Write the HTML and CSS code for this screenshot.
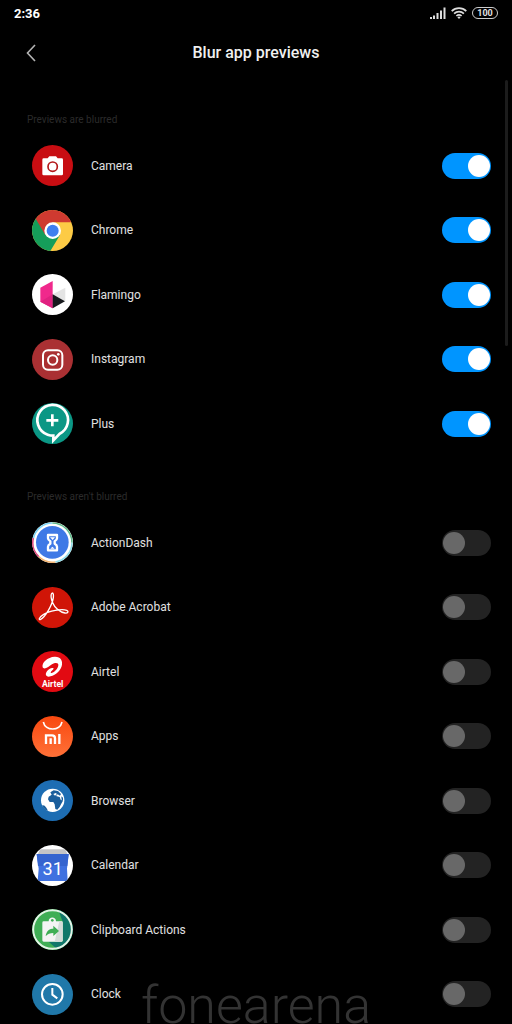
FILE: index.html
```
<!DOCTYPE html>
<html lang="en">
<head>
    <meta charset="UTF-8">
    <meta name="viewport" content="width=device-width, initial-scale=1.0">
    <title>Blur app previews</title>
    <link rel="stylesheet" href="styles.css">
</head>
<body>
    <div class="screen">
        <div class="status-bar">
            <span class="time">2:36</span>
            <div class="status-icons">
                <svg width="16" height="12" viewBox="0 0 16 12" fill="#ddd">
                    <rect x="0" y="10" width="2" height="2"/>
                    <rect x="3" y="8.5" width="2" height="3.5"/>
                    <rect x="6.5" y="6" width="2" height="6"/>
                    <rect x="10" y="3.5" width="2" height="8.5"/>
                    <rect x="13.5" y="0.5" width="2" height="11.5"/>
                </svg>
                <svg width="16" height="12" viewBox="0 0 16 12" fill="none" stroke="#ddd" stroke-width="1.7">
                    <path d="M0.7 4.2a10.4 10.4 0 0 1 14.6 0M3.1 6.7a7 7 0 0 1 9.8 0M5.4 9a3.8 3.8 0 0 1 5.2 0"/>
                    <path d="M8 12l-1.6-1.7a2.3 2.3 0 0 1 3.2 0z" fill="#ddd" stroke="none"/>
                </svg>
                <span class="battery">100</span>
            </div>
        </div>

        <header class="header">
            <button class="back-button" aria-label="Back">
                <svg width="12" height="20" viewBox="0 0 12 20" fill="none" stroke="#b4b4b4" stroke-width="1.6">
                    <path d="M9 2L1.500 10 9 18"/>
                </svg>
            </button>
            <h1>Blur app previews</h1>
        </header>

        <main>
            <section>
                <h2>Previews are blurred</h2>
                <ul class="app-list">
                    <li>
                        <label class="app-row">
                            <svg class="app-icon" viewBox="0 0 123 123">
                                <rect width="123" height="123" fill="#c80d12"/>
                                <path d="M35 40h12l5-6h20l5 6h12a4 4 0 0 1 4 4v43a4 4 0 0 1-4 4H35a4 4 0 0 1-4-4V44a4 4 0 0 1 4-4z" fill="#fff"/>
                                <circle cx="62" cy="65" r="14" fill="#fff" stroke="#b3181a" stroke-width="5"/>
                            </svg>
                            <span class="app-name">Camera</span>
                            <input type="checkbox" class="toggle" checked>
                        </label>
                    </li>
                    <li>
                        <label class="app-row">
                            <svg class="app-icon" viewBox="0 0 123 123">
                                <rect width="123" height="123" fill="#fdcb45"/>
                                <path d="M0 0v123h55l29-48-22-13L14 24z" fill="#159e5a"/>
                                <path d="M0 0h123v37H62v25L40 75 11 26z" fill="#cf3a30"/>
                                <circle cx="62" cy="62" r="25" fill="#fff"/>
                                <circle cx="62" cy="62" r="18" fill="#3f7ff0"/>
                            </svg>
                            <span class="app-name">Chrome</span>
                            <input type="checkbox" class="toggle" checked>
                        </label>
                    </li>
                    <li>
                        <label class="app-row">
                            <svg class="app-icon" viewBox="0 0 123 123">
                                <rect width="123" height="123" fill="#fff"/>
                                <path d="M25 41l37-20v82L25 83z" fill="#f0288c"/>
                                <path d="M25 83l37-22v42z" fill="#e02180"/>
                                <path d="M62 61l38-20v41z" fill="#e4e4e4"/>
                                <path d="M62 61l37 21-37 21z" fill="#17191d"/>
                            </svg>
                            <span class="app-name">Flamingo</span>
                            <input type="checkbox" class="toggle" checked>
                        </label>
                    </li>
                    <li>
                        <label class="app-row">
                            <svg class="app-icon" viewBox="0 0 123 123">
                                <rect width="123" height="123" fill="#aa3033"/>
                                <g fill="none" stroke="#fff" stroke-width="6">
                                    <rect x="33" y="34" width="58" height="58" rx="15"/>
                                    <circle cx="62" cy="63" r="14"/>
                                </g>
                                <circle cx="79" cy="46" r="4" fill="#fff"/>
                            </svg>
                            <span class="app-name">Instagram</span>
                            <input type="checkbox" class="toggle" checked>
                        </label>
                    </li>
                    <li>
                        <label class="app-row">
                            <svg class="app-icon" viewBox="0 0 123 123">
                                <rect width="123" height="123" fill="#0b9785"/>
                                <path d="M47 95A46 46 0 1 1 82 93L64 112V98Q55 98 47 95z" fill="none" stroke="#fff" stroke-width="8"/>
                                <path d="M61 34v36M43 52h36" stroke="#fff" stroke-width="8"/>
                            </svg>
                            <span class="app-name">Plus</span>
                            <input type="checkbox" class="toggle" checked>
                        </label>
                    </li>
                </ul>
            </section>

            <section>
                <h2>Previews aren't blurred</h2>
                <ul class="app-list">
                    <li>
                        <label class="app-row">
                            <svg class="app-icon" viewBox="0 0 123 123">
                                <rect width="123" height="123" fill="#fff"/>
                                <g fill="none" stroke-width="5">
                                    <path d="M4 48A59 59 0 0 1 61 3" stroke="#7fd4f5"/>
                                    <path d="M61 3a59 59 0 0 1 59 59" stroke="#5fb98a"/>
                                    <path d="M120 62a59 59 0 0 1-50 58" stroke="#8edbe8"/>
                                    <path d="M70 120A59 59 0 0 1 20 104" stroke="#f2b36f"/>
                                    <path d="M20 104A59 59 0 0 1 4 48" stroke="#e0457b"/>
                                </g>
                                <circle cx="61" cy="61" r="49" fill="#3f79e6"/>
                                <path d="M48 39h27v10q0 5-7 9v7q7 4 7 9v11H48V74q0-5 7-9v-7q-7-4-7-9z" fill="none" stroke="#fff" stroke-width="7" stroke-linejoin="round"/>
                                <path d="M54 46h15l-7 8zM55 80l6-6 7 6z" fill="#fff"/>
                            </svg>
                            <span class="app-name">ActionDash</span>
                            <input type="checkbox" class="toggle">
                        </label>
                    </li>
                    <li>
                        <label class="app-row">
                            <svg class="app-icon" viewBox="0 0 123 123">
                                <rect width="123" height="123" fill="#d01507"/>
                                <path d="M61 18c-7 3-3 20 1 29 6 15 22 29 37 31 9 1 12-5 5-8-14-5-53 1-70 13-14 9-15 17-8 14 14-7 35-43 38-65 1-8 0-14-3-14z" fill="none" stroke="#fff" stroke-width="4" stroke-linejoin="round"/>
                            </svg>
                            <span class="app-name">Adobe Acrobat</span>
                            <input type="checkbox" class="toggle">
                        </label>
                    </li>
                    <li>
                        <label class="app-row">
                            <svg class="app-icon" viewBox="0 0 123 123">
                                <rect width="123" height="123" fill="#e20a12"/>
                                <path d="M32 49C28 35 47 18 68 17c17-1 26 12 21 29-5 17-24 31-39 31-9 0-11-8-5-16 4-6 12-11 17-10 5 0 3 4-1 7-5 4-7 9-2 8 9-2 19-13 20-23 1-9-10-9-19-3-9 7-24 18-28 9z" fill="#fff"/>
                                <text class="airtel-text" x="62" y="109" text-anchor="middle">Airtel</text>
                            </svg>
                            <span class="app-name">Airtel</span>
                            <input type="checkbox" class="toggle">
                        </label>
                    </li>
                    <li>
                        <label class="app-row">
                            <svg class="app-icon" viewBox="0 0 123 123">
                                <defs>
                                    <linearGradient id="apps-bg" x1="0" y1="0" x2="0" y2="1">
                                        <stop offset="0" stop-color="#f8480f"/>
                                        <stop offset="1" stop-color="#ff7138"/>
                                    </linearGradient>
                                </defs>
                                <rect width="123" height="123" fill="url(#apps-bg)"/>
                                <path d="M34 18c6 28 50 28 56 0" fill="none" stroke="#fff" stroke-width="5"/>
                                <path d="M42 84V58h18q9 0 9 9v17M56 67v17M82 54v30" fill="none" stroke="#fff" stroke-width="7"/>
                            </svg>
                            <span class="app-name">Apps</span>
                            <input type="checkbox" class="toggle">
                        </label>
                    </li>
                    <li>
                        <label class="app-row">
                            <svg class="app-icon" viewBox="0 0 123 123">
                                <rect width="123" height="123" fill="#1d6db3"/>
                                <circle cx="62" cy="61" r="35" fill="#fff"/>
                                <g fill="#1a5e9c">
                                    <path d="M55 37l10-6 13 2 9 9-3 5-7-4-5 5 11 3 3 8 7 3-6 11-4 8-7 8-6-2-2-14-4-7-11 0-5-8 2-8 9-6z"/>
                                    <path d="M31 75l7 2 5 6 5 9-8-3-8-8z"/>
                                    <path d="M88 49l5 4v10l-4-3z"/>
                                </g>
                                <path d="M64 42l7-3 4 3-6 5z" fill="#fff"/>
                            </svg>
                            <span class="app-name">Browser</span>
                            <input type="checkbox" class="toggle">
                        </label>
                    </li>
                    <li>
                        <label class="app-row">
                            <svg class="app-icon" viewBox="0 0 123 123">
                                <rect width="123" height="123" fill="#fff"/>
                                <path d="M24 13h76l6 14H18z" fill="#c4c4c6"/>
                                <path d="M14 27h96l-5 44 2 37H17l3-37z" fill="#3f71e0"/>
                                <path d="M14 27h96l-4 36H18z" fill="#3564cf"/>
                                <text class="date-text" x="62" y="90" text-anchor="middle">31</text>
                            </svg>
                            <span class="app-name">Calendar</span>
                            <input type="checkbox" class="toggle">
                        </label>
                    </li>
                    <li>
                        <label class="app-row">
                            <svg class="app-icon" viewBox="0 0 123 123">
                                <rect width="123" height="123" fill="#3fae55"/>
                                <path d="M78 0h45v123H78L50 98h42V38z" fill="#10776a"/>
                                <path d="M35 37h15c0-15 22-15 22 0h16a4 4 0 0 1 4 4v53a4 4 0 0 1-4 4H35a4 4 0 0 1-4-4V41a4 4 0 0 1 4-4z" fill="#f4f4f4"/>
                                <path d="M82 37h6a4 4 0 0 1 4 4v53a4 4 0 0 1-4 4H68z" fill="#d5dcda"/>
                                <circle cx="61" cy="34" r="4" fill="#3fae55"/>
                                <path d="M41 82c2-18 13-23 23-23v-9l17 16-17 15v-9c-10 0-17 3-23 10z" fill="#3fae55"/>
                                <circle cx="61.5" cy="61.5" r="58" fill="none" stroke="#e3f3e6" stroke-width="6"/>
                            </svg>
                            <span class="app-name">Clipboard Actions</span>
                            <input type="checkbox" class="toggle">
                        </label>
                    </li>
                    <li>
                        <label class="app-row">
                            <svg class="app-icon" viewBox="0 0 123 123">
                                <rect width="123" height="123" fill="#2078a9"/>
                                <g fill="none" stroke="#fff" stroke-width="6">
                                    <circle cx="61" cy="61" r="31"/>
                                    <path d="M61 42v20l15 11"/>
                                </g>
                            </svg>
                            <span class="app-name">Clock</span>
                            <input type="checkbox" class="toggle">
                        </label>
                    </li>
                </ul>
            </section>
        </main>

        <div class="scroll-thumb"></div>
        <div class="watermark">fonearena</div>
    </div>
</body>
</html>
```
FILE: styles.css
```
* {
    margin: 0;
    padding: 0;
    box-sizing: border-box;
}

body {
    font-family: Roboto, 'Noto Sans', sans-serif;
    background: #000;
    color: #e0e0e0;
}

.screen {
    position: relative;
    height: 100vh;
    overflow: hidden;
}

/* Status bar */
.status-bar {
    display: flex;
    align-items: center;
    justify-content: space-between;
    height: 26px;
    padding: 0 14px;
}

.time {
    font-size: 13px;
    font-weight: 700;
    color: #fff;
}

.status-icons {
    display: flex;
    align-items: center;
    gap: 5px;
}

.battery {
    width: 26px;
    height: 12px;
    border: 1px solid #ccc;
    border-radius: 6px;
    font-size: 9px;
    font-weight: 700;
    line-height: 10px;
    text-align: center;
}

/* Header */
.header {
    display: grid;
    grid-template-columns: 24px 1fr 24px;
    align-items: center;
    height: 53px;
    padding: 0 20px;
}

.back-button {
    display: flex;
    justify-content: center;
    background: none;
    border: none;
    cursor: pointer;
}

h1 {
    font-size: 16px;
    font-weight: 500;
    text-align: center;
    color: #f0f0f0;
}

/* App lists */
h2 {
    height: 54px;
    padding: 34px 27px 0;
    font-size: 10px;
    font-weight: 400;
    line-height: 14px;
    color: #2b2b2b;
}

.app-list {
    display: grid;
    grid-auto-rows: 65px 64px;
    list-style: none;
}

.app-row {
    display: flex;
    align-items: center;
    gap: 18px;
    height: 100%;
    padding: 0 21px 0 32px;
    cursor: pointer;
}

.app-icon {
    width: 41px;
    height: 41px;
    border-radius: 50%;
}

.app-name {
    flex: 1;
    font-size: 12px;
}

.airtel-text {
    font-size: 26px;
    font-weight: 700;
    fill: #fff;
}

.date-text {
    font-size: 54px;
    font-weight: 400;
    fill: #fff;
}

/* Switch */
.toggle {
    appearance: none;
    width: 49px;
    height: 26px;
    padding: 2px 1px;
    border-radius: 13px;
    background: #232323;
    cursor: pointer;
}

.toggle::before {
    content: '';
    display: block;
    width: 22px;
    height: 22px;
    border-radius: 50%;
    background: #686868;
}

.toggle:checked {
    background: #0095ff;
}

.toggle:checked::before {
    margin-left: auto;
    background: #fff;
}

.scroll-thumb {
    position: absolute;
    top: 80px;
    right: 4px;
    width: 3px;
    height: 266px;
    border-radius: 2px;
    background: #1c1c1c;
}

.watermark {
    position: absolute;
    left: 0;
    right: 0;
    bottom: 0;
    font-size: 52px;
    font-weight: 300;
    line-height: 36px;
    text-align: center;
    color: #333;
    pointer-events: none;
}
```
